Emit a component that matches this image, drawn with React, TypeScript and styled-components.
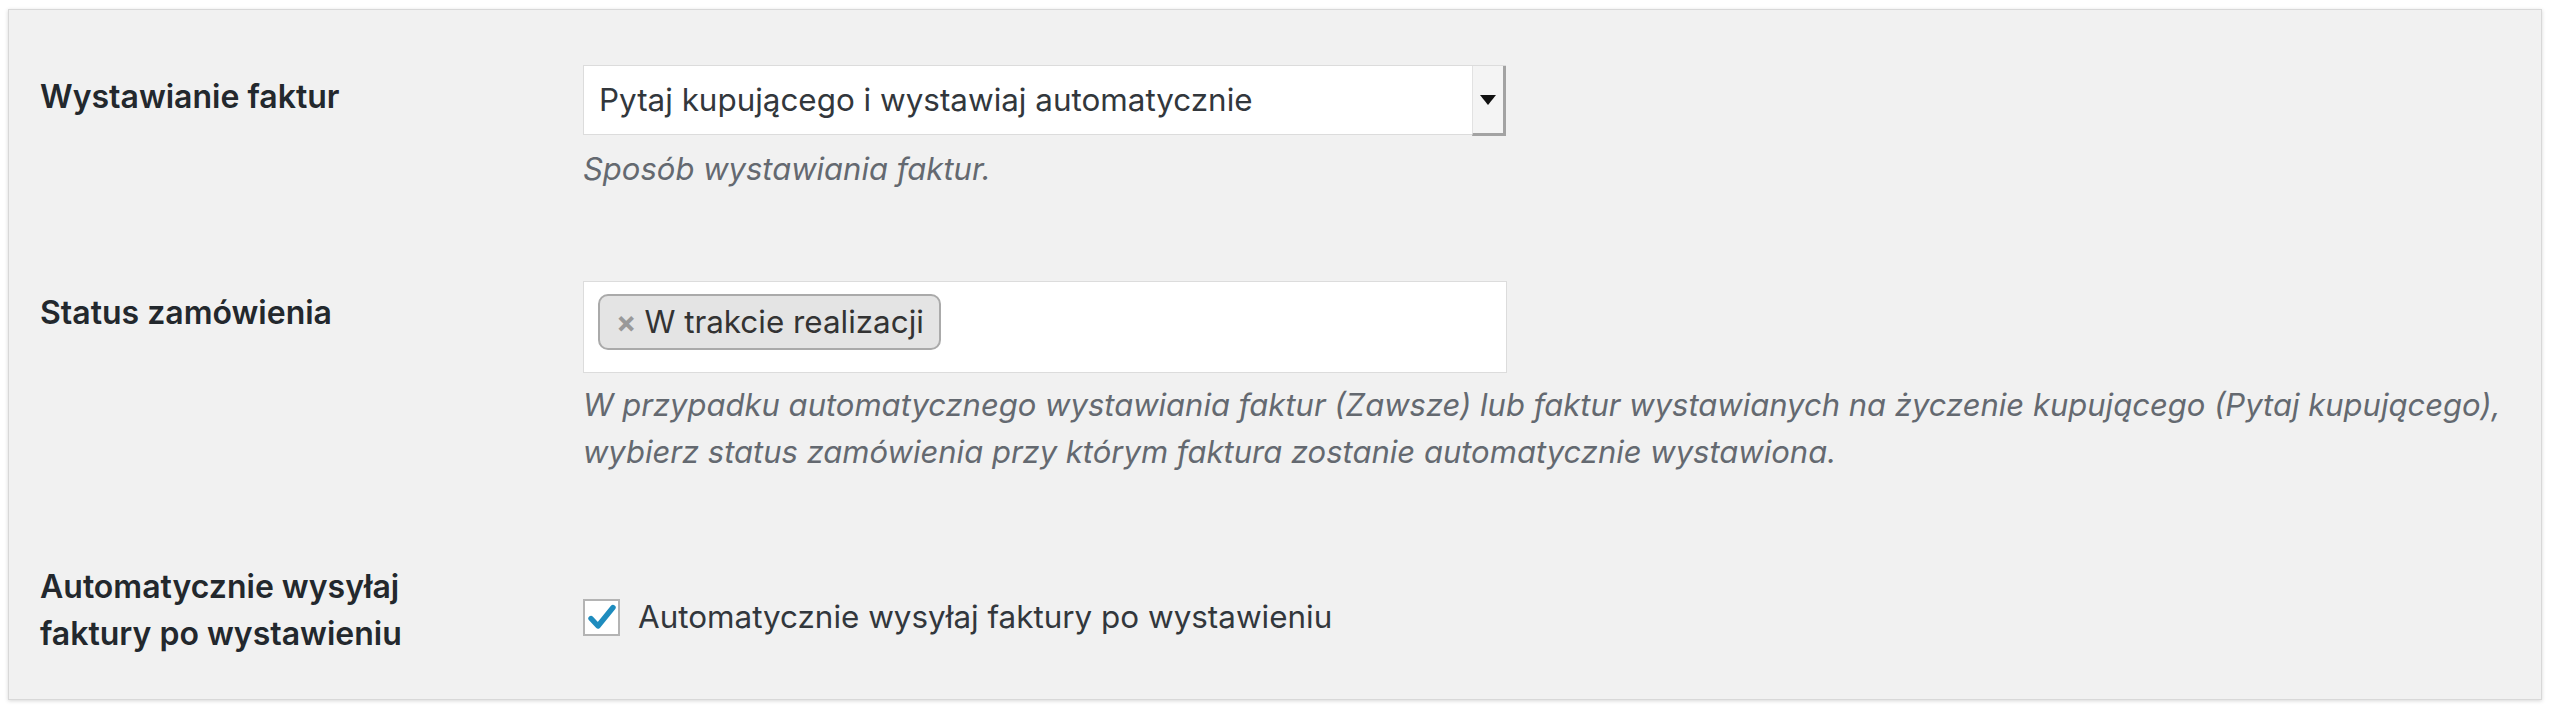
import React from 'react';
import styled, { createGlobalStyle } from 'styled-components';

const GlobalStyle = createGlobalStyle`
  html, body {
    margin: 0;
    padding: 0;
    background: #ffffff;
  }
  body {
    font-family: Inter, "Liberation Sans", Arial, sans-serif;
    -webkit-font-smoothing: antialiased;
  }
`;

const Page = styled.div`
  padding: 9px 10px 10px 8px;
`;

const Panel = styled.section`
  background: #f1f1f1;
  border: 1px solid #d8d8d8;
  box-shadow: 0 1px 4px rgba(0, 0, 0, 0.16);
  padding: 0 0 0 31px;
`;

const Row = styled.div<{ $top: number; $bottom: number }>`
  display: flex;
  padding: ${(p) => p.$top}px 0 ${(p) => p.$bottom}px;
`;

const Label = styled.div<{ $offset: number }>`
  flex: 0 0 543px;
  padding-top: ${(p) => p.$offset}px;
  font-size: 32px;
  font-weight: 600;
  line-height: 47px;
  color: #23282d;
`;

const Field = styled.div<{ $offset?: number }>`
  flex: 1;
  min-width: 0;
  padding-top: ${(p) => p.$offset ?? 0}px;
  color: #32373c;
  font-size: 31.4px;
`;

const Select = styled.div`
  box-sizing: border-box;
  width: 923px;
  height: 70px;
  display: flex;
  background: #ffffff;
  border: 1px solid #dcdcdc;
`;

const SelectValue = styled.div`
  flex: 1;
  display: flex;
  align-items: center;
  padding-left: 15px;
  color: #32373c;
`;

const SelectArrow = styled.div`
  flex: 0 0 30px;
  display: flex;
  align-items: center;
  justify-content: center;
  background: #f4f4f4;
  border-left: 1px solid #e2e2e2;
  border-right: 3px solid #a3a3a3;
  border-bottom: 3px solid #a3a3a3;
  margin-bottom: -2px;
  margin-right: -1px;
`;

const Triangle = styled.span`
  width: 0;
  height: 0;
  border-left: 8px solid transparent;
  border-right: 8px solid transparent;
  border-top: 10px solid #111111;
`;

const Description = styled.p<{ $gap: number }>`
  margin: ${(p) => p.$gap}px 0 0;
  font-size: 31px;
  font-style: italic;
  line-height: 47px;
  color: #646970;
  white-space: nowrap;
`;

const MultiBox = styled.div`
  box-sizing: border-box;
  width: 924px;
  height: 92px;
  padding: 12px 0 0 14px;
  background: #ffffff;
  border: 1px solid #dcdcdc;
`;

const Tag = styled.span`
  box-sizing: border-box;
  height: 56px;
  display: inline-flex;
  align-items: center;
  gap: 8px;
  padding: 0 15px 0 16px;
  background: #e4e4e4;
  border: 2px solid #aaaaaa;
  border-radius: 10px;
  color: #333333;
`;

const TagRemove = styled.span`
  font-size: 30px;
  font-weight: 700;
  color: #999999;
  line-height: 1;
`;

const CheckRow = styled.label`
  display: flex;
  align-items: center;
  gap: 18px;
  line-height: 47px;
`;

const CheckBox = styled.span`
  box-sizing: border-box;
  width: 37px;
  height: 37px;
  display: flex;
  align-items: center;
  justify-content: center;
  background: #ffffff;
  border: 2px solid #b4b4b4;
`;

const Check = () => (
  <svg width="30" height="30" viewBox="0 0 30 30">
    <path
      d="M4 15.5 L11 23 L26 4.5"
      fill="none"
      stroke="#1e8cbe"
      strokeWidth="5.4"
      strokeLinecap="round"
      strokeLinejoin="round"
    />
  </svg>
);

export default function App() {
  return (
    <>
      <GlobalStyle />
      <Page>
        <Panel>
          <Row $top={55} $bottom={44}>
            <Label $offset={8}>Wystawianie faktur</Label>
            <Field>
              <Select>
                <SelectValue>Pytaj kupującego i wystawiaj automatycznie</SelectValue>
                <SelectArrow>
                  <Triangle />
                </SelectArrow>
              </Select>
              <Description $gap={10}>Sposób wystawiania faktur.</Description>
            </Field>
          </Row>
          <Row $top={45} $bottom={44}>
            <Label $offset={8}>Status zamówienia</Label>
            <Field>
              <MultiBox>
                <Tag>
                  <TagRemove>×</TagRemove>W trakcie realizacji
                </Tag>
              </MultiBox>
              <Description $gap={8}>
                W przypadku automatycznego wystawiania faktur (Zawsze) lub faktur wystawianych na życzenie kupującego (Pytaj kupującego),
                <br />
                wybierz status zamówienia przy którym faktura zostanie automatycznie wystawiona.
              </Description>
            </Field>
          </Row>
          <Row $top={44} $bottom={42}>
            <Label $offset={0}>
              Automatycznie wysyłaj
              <br />
              faktury po wystawieniu
            </Label>
            <Field $offset={31}>
              <CheckRow>
                <CheckBox>
                  <Check />
                </CheckBox>
                Automatycznie wysyłaj faktury po wystawieniu
              </CheckRow>
            </Field>
          </Row>
        </Panel>
      </Page>
    </>
  );
}
